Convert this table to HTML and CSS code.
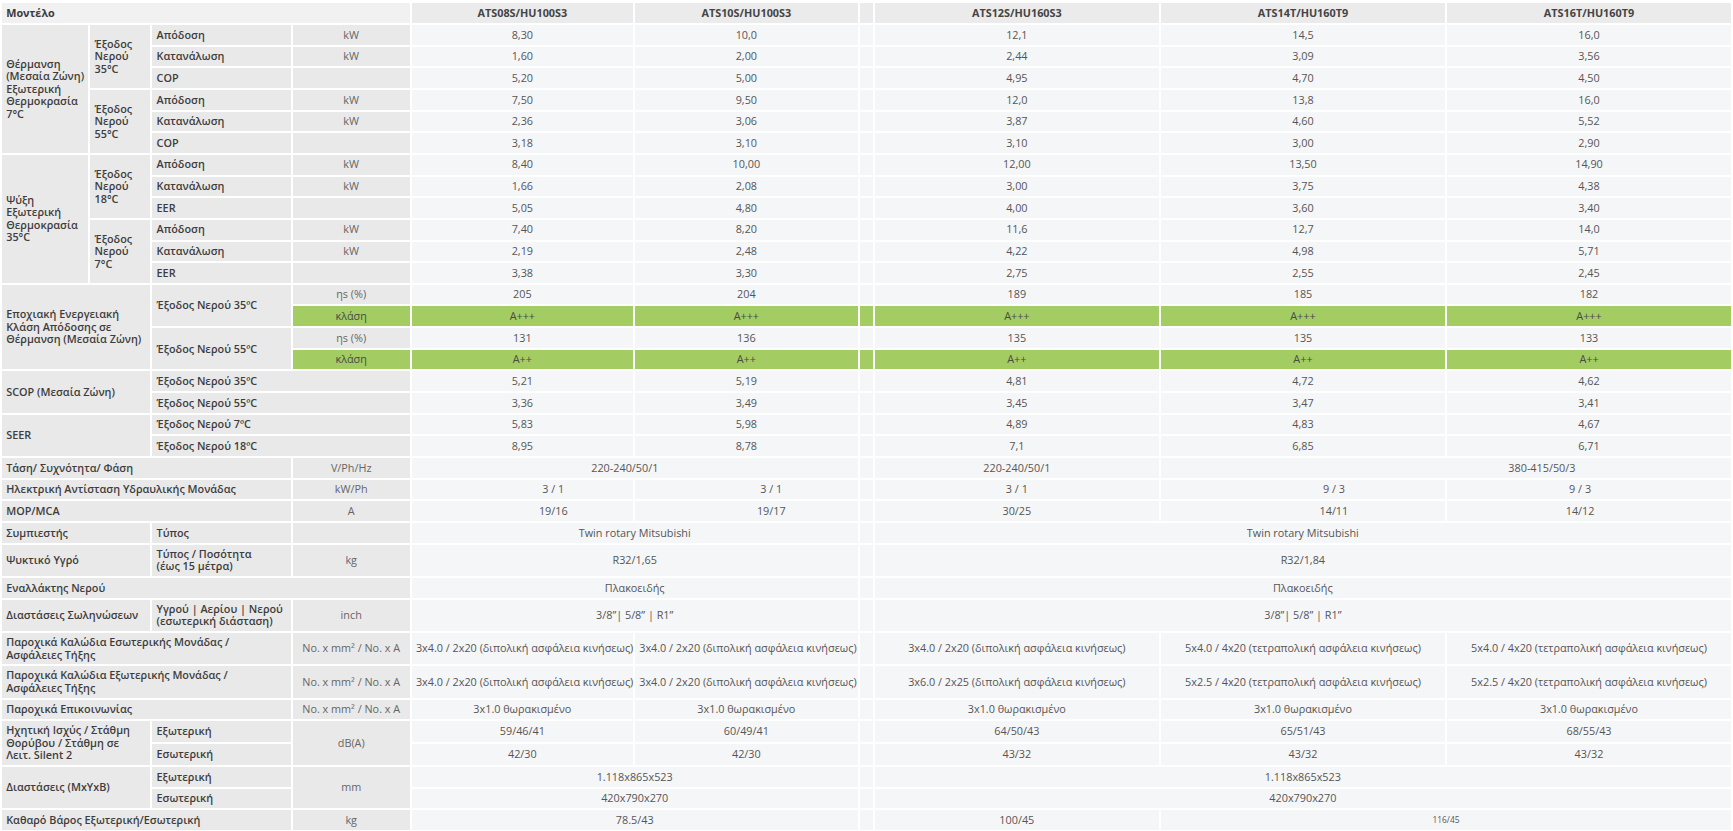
FILE: index.html
```html
<!DOCTYPE html>
<html lang="el">
<head>
<meta charset="utf-8">
<title>Τεχνικά χαρακτηριστικά</title>
<link rel="stylesheet" href="styles.css">
</head>
<body>
<table class="specs">
  <colgroup>
    <col class="c-a"><col class="c-b"><col class="c-c"><col class="c-d">
    <col class="c-e"><col class="c-f"><col class="c-x"><col class="c-g"><col class="c-h"><col>
  </colgroup>
  <tr>
    <th class="ttl" colspan="4">Μοντέλο</th>
    <th class="hd">ATS08S/HU100S3</th><th class="hd">ATS10S/HU100S3</th><th class="hd"></th>
    <th class="hd">ATS12S/HU160S3</th><th class="hd">ATS14T/HU160T9</th><th class="hd">ATS16T/HU160T9</th>
  </tr>
  <tr>
    <td class="lb" rowspan="6">Θέρμανση (Μεσαία Ζώνη) Εξωτερική Θερμοκρασία 7°C</td>
    <td class="lb" rowspan="3">Έξοδος Νερού 35°C</td>
    <td class="lb">Απόδοση</td><td class="un">kW</td>
    <td class="v">8,30</td><td class="v">10,0</td><td class="v"></td><td class="v">12,1</td><td class="v">14,5</td><td class="v">16,0</td>
  </tr>
  <tr>
    <td class="lb">Κατανάλωση</td><td class="un">kW</td>
    <td class="v">1,60</td><td class="v">2,00</td><td class="v"></td><td class="v">2,44</td><td class="v">3,09</td><td class="v">3,56</td>
  </tr>
  <tr>
    <td class="lb">COP</td><td class="un"></td>
    <td class="v">5,20</td><td class="v">5,00</td><td class="v"></td><td class="v">4,95</td><td class="v">4,70</td><td class="v">4,50</td>
  </tr>
  <tr>
    <td class="lb" rowspan="3">Έξοδος Νερού 55°C</td>
    <td class="lb">Απόδοση</td><td class="un">kW</td>
    <td class="v">7,50</td><td class="v">9,50</td><td class="v"></td><td class="v">12,0</td><td class="v">13,8</td><td class="v">16,0</td>
  </tr>
  <tr>
    <td class="lb">Κατανάλωση</td><td class="un">kW</td>
    <td class="v">2,36</td><td class="v">3,06</td><td class="v"></td><td class="v">3,87</td><td class="v">4,60</td><td class="v">5,52</td>
  </tr>
  <tr>
    <td class="lb">COP</td><td class="un"></td>
    <td class="v">3,18</td><td class="v">3,10</td><td class="v"></td><td class="v">3,10</td><td class="v">3,00</td><td class="v">2,90</td>
  </tr>
  <tr>
    <td class="lb" rowspan="6">Ψύξη Εξωτερική Θερμοκρασία 35°C</td>
    <td class="lb" rowspan="3">Έξοδος Νερού 18°C</td>
    <td class="lb">Απόδοση</td><td class="un">kW</td>
    <td class="v">8,40</td><td class="v">10,00</td><td class="v"></td><td class="v">12,00</td><td class="v">13,50</td><td class="v">14,90</td>
  </tr>
  <tr>
    <td class="lb">Κατανάλωση</td><td class="un">kW</td>
    <td class="v">1,66</td><td class="v">2,08</td><td class="v"></td><td class="v">3,00</td><td class="v">3,75</td><td class="v">4,38</td>
  </tr>
  <tr>
    <td class="lb">EER</td><td class="un"></td>
    <td class="v">5,05</td><td class="v">4,80</td><td class="v"></td><td class="v">4,00</td><td class="v">3,60</td><td class="v">3,40</td>
  </tr>
  <tr>
    <td class="lb" rowspan="3">Έξοδος Νερού 7°C</td>
    <td class="lb">Απόδοση</td><td class="un">kW</td>
    <td class="v">7,40</td><td class="v">8,20</td><td class="v"></td><td class="v">11,6</td><td class="v">12,7</td><td class="v">14,0</td>
  </tr>
  <tr>
    <td class="lb">Κατανάλωση</td><td class="un">kW</td>
    <td class="v">2,19</td><td class="v">2,48</td><td class="v"></td><td class="v">4,22</td><td class="v">4,98</td><td class="v">5,71</td>
  </tr>
  <tr>
    <td class="lb">EER</td><td class="un"></td>
    <td class="v">3,38</td><td class="v">3,30</td><td class="v"></td><td class="v">2,75</td><td class="v">2,55</td><td class="v">2,45</td>
  </tr>
  <tr>
    <td class="lb" colspan="2" rowspan="4">Εποχιακή Ενεργειακή Κλάση Απόδοσης σε Θέρμανση (Μεσαία Ζώνη)</td>
    <td class="lb" rowspan="2">Έξοδος Νερού 35ºC</td>
    <td class="un">ηs (%)</td>
    <td class="v">205</td><td class="v">204</td><td class="v"></td><td class="v">189</td><td class="v">185</td><td class="v">182</td>
  </tr>
  <tr class="green">
    <td class="un">κλάση</td>
    <td class="v">A+++</td><td class="v">A+++</td><td class="v"></td><td class="v">A+++</td><td class="v">A+++</td><td class="v">A+++</td>
  </tr>
  <tr>
    <td class="lb" rowspan="2">Έξοδος Νερού 55ºC</td>
    <td class="un">ηs (%)</td>
    <td class="v">131</td><td class="v">136</td><td class="v"></td><td class="v">135</td><td class="v">135</td><td class="v">133</td>
  </tr>
  <tr class="green">
    <td class="un">κλάση</td>
    <td class="v">A++</td><td class="v">A++</td><td class="v"></td><td class="v">A++</td><td class="v">A++</td><td class="v">A++</td>
  </tr>
  <tr>
    <td class="lb" colspan="2" rowspan="2">SCOP (Μεσαία Ζώνη)</td>
    <td class="lb" colspan="2">Έξοδος Νερού 35ºC</td>
    <td class="v">5,21</td><td class="v">5,19</td><td class="v"></td><td class="v">4,81</td><td class="v">4,72</td><td class="v">4,62</td>
  </tr>
  <tr>
    <td class="lb" colspan="2">Έξοδος Νερού 55ºC</td>
    <td class="v">3,36</td><td class="v">3,49</td><td class="v"></td><td class="v">3,45</td><td class="v">3,47</td><td class="v">3,41</td>
  </tr>
  <tr>
    <td class="lb" colspan="2" rowspan="2">SEER</td>
    <td class="lb" colspan="2">Έξοδος Νερού 7ºC</td>
    <td class="v">5,83</td><td class="v">5,98</td><td class="v"></td><td class="v">4,89</td><td class="v">4,83</td><td class="v">4,67</td>
  </tr>
  <tr>
    <td class="lb" colspan="2">Έξοδος Νερού 18ºC</td>
    <td class="v">8,95</td><td class="v">8,78</td><td class="v"></td><td class="v">7,1</td><td class="v">6,85</td><td class="v">6,71</td>
  </tr>
  <tr>
    <td class="lb" colspan="3">Τάση/ Συχνότητα/ Φάση</td><td class="un">V/Ph/Hz</td>
    <td class="v sh-ef" colspan="2">220-240/50/1</td><td class="v"></td><td class="v">220-240/50/1</td><td class="v sh-hi" colspan="2">380-415/50/3</td>
  </tr>
  <tr>
    <td class="lb" colspan="3">Ηλεκτρική Αντίσταση Υδραυλικής Μονάδας</td><td class="un">kW/Ph</td>
    <td class="v sh-e">3 / 1</td><td class="v sh-f">3 / 1</td><td class="v"></td><td class="v">3 / 1</td><td class="v sh-h">9 / 3</td><td class="v sh-i">9 / 3</td>
  </tr>
  <tr>
    <td class="lb" colspan="3">MOP/MCA</td><td class="un">A</td>
    <td class="v sh-e">19/16</td><td class="v sh-f">19/17</td><td class="v"></td><td class="v">30/25</td><td class="v sh-h">14/11</td><td class="v sh-i">14/12</td>
  </tr>
  <tr>
    <td class="lb" colspan="2">Συμπιεστής</td><td class="lb">Τύπος</td><td class="un"></td>
    <td class="v" colspan="2">Twin rotary Mitsubishi</td><td class="v"></td><td class="v" colspan="3">Twin rotary Mitsubishi</td>
  </tr>
  <tr>
    <td class="lb" colspan="2">Ψυκτικό Υγρό</td><td class="lb">Τύπος / Ποσότητα<br>(έως 15 μέτρα)</td><td class="un">kg</td>
    <td class="v" colspan="2">R32/1,65</td><td class="v"></td><td class="v" colspan="3">R32/1,84</td>
  </tr>
  <tr>
    <td class="lb" colspan="4">Εναλλάκτης Νερού</td>
    <td class="v" colspan="2">Πλακοειδής</td><td class="v"></td><td class="v" colspan="3">Πλακοειδής</td>
  </tr>
  <tr>
    <td class="lb" colspan="2">Διαστάσεις Σωληνώσεων</td><td class="lb">Υγρού | Αερίου | Νερού<br>(εσωτερική διάσταση)</td><td class="un">inch</td>
    <td class="v" colspan="2">3/8”| 5/8” | R1”</td><td class="v"></td><td class="v" colspan="3">3/8”| 5/8” | R1”</td>
  </tr>
  <tr>
    <td class="lb" colspan="3">Παροχικά Καλώδια Εσωτερικής Μονάδας /<br>Ασφάλειες Τήξης</td><td class="un">No. x mm² / No. x A</td>
    <td class="v">3x4.0 / 2x20 (διπολική ασφάλεια κινήσεως)</td><td class="v">3x4.0 / 2x20 (διπολική ασφάλεια κινήσεως)</td><td class="v"></td>
    <td class="v">3x4.0 / 2x20 (διπολική ασφάλεια κινήσεως)</td><td class="v">5x4.0 / 4x20 (τετραπολική ασφάλεια κινήσεως)</td><td class="v">5x4.0 / 4x20 (τετραπολική ασφάλεια κινήσεως)</td>
  </tr>
  <tr>
    <td class="lb" colspan="3">Παροχικά Καλώδια Εξωτερικής Μονάδας /<br>Ασφάλειες Τήξης</td><td class="un">No. x mm² / No. x A</td>
    <td class="v">3x4.0 / 2x20 (διπολική ασφάλεια κινήσεως)</td><td class="v">3x4.0 / 2x20 (διπολική ασφάλεια κινήσεως)</td><td class="v"></td>
    <td class="v">3x6.0 / 2x25 (διπολική ασφάλεια κινήσεως)</td><td class="v">5x2.5 / 4x20 (τετραπολική ασφάλεια κινήσεως)</td><td class="v">5x2.5 / 4x20 (τετραπολική ασφάλεια κινήσεως)</td>
  </tr>
  <tr>
    <td class="lb" colspan="3">Παροχικά Επικοινωνίας</td><td class="un">No. x mm² / No. x A</td>
    <td class="v">3x1.0 θωρακισμένο</td><td class="v">3x1.0 θωρακισμένο</td><td class="v"></td><td class="v">3x1.0 θωρακισμένο</td><td class="v">3x1.0 θωρακισμένο</td><td class="v">3x1.0 θωρακισμένο</td>
  </tr>
  <tr>
    <td class="lb" colspan="2" rowspan="2">Ηχητική Ισχύς / Στάθμη Θορύβου / Στάθμη σε Λειτ. Silent 2</td>
    <td class="lb">Εξωτερική</td><td class="un" rowspan="2">dB(A)</td>
    <td class="v">59/46/41</td><td class="v">60/49/41</td><td class="v"></td><td class="v">64/50/43</td><td class="v">65/51/43</td><td class="v">68/55/43</td>
  </tr>
  <tr>
    <td class="lb">Εσωτερική</td>
    <td class="v">42/30</td><td class="v">42/30</td><td class="v"></td><td class="v">43/32</td><td class="v">43/32</td><td class="v">43/32</td>
  </tr>
  <tr>
    <td class="lb" colspan="2" rowspan="2">Διαστάσεις (ΜxΥxΒ)</td>
    <td class="lb">Εξωτερική</td><td class="un" rowspan="2">mm</td>
    <td class="v" colspan="2">1.118x865x523</td><td class="v"></td><td class="v" colspan="3">1.118x865x523</td>
  </tr>
  <tr>
    <td class="lb">Εσωτερική</td>
    <td class="v" colspan="2">420x790x270</td><td class="v"></td><td class="v" colspan="3">420x790x270</td>
  </tr>
  <tr>
    <td class="lb" colspan="3">Καθαρό Βάρος Εξωτερική/Εσωτερική</td><td class="un">kg</td>
    <td class="v" colspan="2">78.5/43</td><td class="v"></td><td class="v">100/45</td><td class="v sm" colspan="2">116/45</td>
  </tr>
</table>
</body>
</html>
```

FILE: styles.css
```css
html, body {
  margin: 0;
  padding: 0;
  background: #ffffff;
}

body {
  font-family: "Open Sans", "Noto Sans", "DejaVu Sans", sans-serif;
}

.specs {
  width: 1733px;
  margin-top: 1.3px;
  border-collapse: separate;
  border-spacing: 2px;
  table-layout: fixed;
  font-size: 10.83px;
  line-height: 12.5px;
}

.c-a { width: 86.4px; }
.c-b { width: 60px; }
.c-c { width: 138.3px; }
.c-d { width: 117px; }
.c-e { width: 221.3px; }
.c-f { width: 222.7px; }
.c-x { width: 13px; }
.c-g { width: 284.3px; }
.c-h { width: 284px; }

.specs tr {
  height: 19.67px;
}

.specs th,
.specs td {
  padding: 3.17px 4.2px;
  vertical-align: middle;
}

.ttl {
  background: #f1f1f1;
  color: #3c3c3c;
  font-weight: 700;
  text-align: left;
  padding-left: 8.3px;
}

.hd {
  background: #ebebeb;
  color: #444444;
  font-weight: 700;
  text-align: center;
}

.lb {
  background: #e9e9e9;
  color: #3d3d3d;
  font-weight: 600;
  text-align: left;
}

.un {
  background: #e9e9e9;
  color: #666666;
  font-weight: 400;
  text-align: center;
}

.v {
  background: #f5f6f8;
  color: #555555;
  font-weight: 400;
  text-align: center;
  white-space: nowrap;
}

.green .un,
.green .v {
  background: #a3cd63;
  color: #4a4a4a;
}

.sm {
  font-size: 8.4px;
}

/* value cells whose text sits off-centre in the original */
.specs .sh-e { padding-left: 66px; }
.specs .sh-f { padding-left: 54px; }
.specs .sh-h { padding-left: 66px; }
.specs .sh-i { padding-right: 22px; }
.specs .sh-ef { padding-right: 24px; }
.specs .sh-hi { padding-left: 196px; }
```
